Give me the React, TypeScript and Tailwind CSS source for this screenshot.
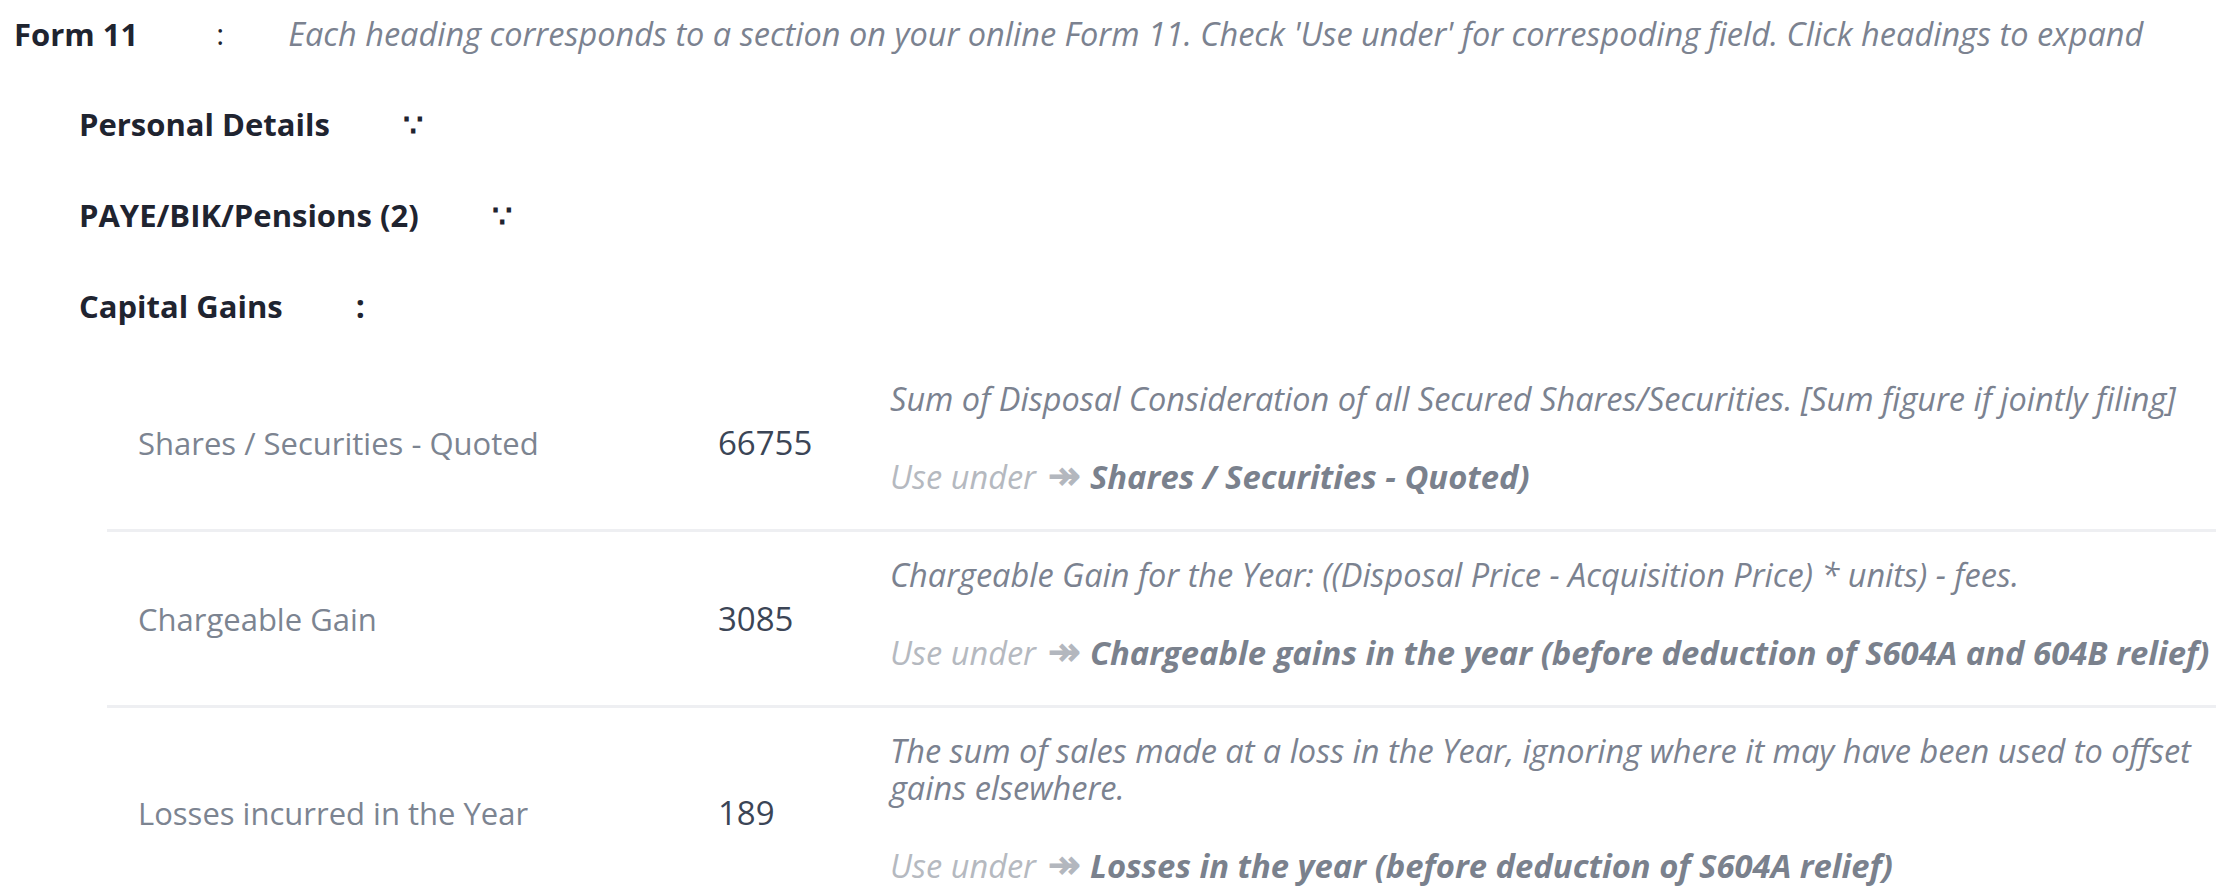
import React from "react";

const FONT = "font-['Open_Sans','Noto_Sans',sans-serif]";

type Row = {
  label: string;
  value: string;
  desc: string;
  use: string;
};

const rows: Row[] = [
  {
    label: "Shares / Securities - Quoted",
    value: "66755",
    desc: "Sum of Disposal Consideration of all Secured Shares/Securities. [Sum figure if jointly filing]",
    use: "Shares / Securities - Quoted)",
  },
  {
    label: "Chargeable Gain",
    value: "3085",
    desc: "Chargeable Gain for the Year: ((Disposal Price - Acquisition Price) * units) - fees.",
    use: "Chargeable gains in the year (before deduction of S604A and 604B relief)",
  },
  {
    label: "Losses incurred in the Year",
    value: "189",
    desc: "The sum of sales made at a loss in the Year, ignoring where it may have been used to offset gains elsewhere.",
    use: "Losses in the year (before deduction of S604A relief)",
  },
];

function Heading({ title, mark }: { title: string; mark: string }) {
  return (
    <div className="flex items-center h-[40px] pl-[79px]">
      <span className="text-[31px] font-bold text-[#1f2430] leading-[40px]">{title}</span>
      <span className="ml-[73px] text-[32px] font-bold text-[#1f2430] leading-[40px]">{mark}</span>
    </div>
  );
}

export default function App() {
  return (
    <div className={`${FONT} w-[2216px] h-[896px] overflow-hidden bg-white`}>
      <div className="flex items-center h-[40px] mt-[14px] pl-[14px]">
        <span className="text-[31px] font-bold text-[#1f2430] leading-[40px]">Form 11</span>
        <span className="ml-[78px] text-[30px] text-[#1f2430] leading-[40px]">:</span>
        <span className="ml-[64px] text-[32.5px] italic text-[#7b8290] leading-[40px] whitespace-nowrap">
          Each heading corresponds to a section on your online Form 11. Check 'Use under' for correspoding field. Click headings to expand
        </span>
      </div>
      <div className="flex flex-col gap-[51px] mt-[50px]">
        <Heading title="Personal Details" mark="∵" />
        <Heading title="PAYE/BIK/Pensions (2)" mark="∵" />
        <Heading title="Capital Gains" mark=":" />
      </div>
      <div className="ml-[107px] mt-[30px] w-[2200px]">
        {rows.map((r, i) => (
          <div
            key={r.label}
            className={`flex items-center ${i < rows.length - 1 ? "border-b-[3px] border-[#eeeff2]" : ""}`}
          >
            <div className="w-[611px] shrink-0 pl-[31px] text-[31px] text-[#7c8491] leading-[40px]">{r.label}</div>
            <div className="w-[172px] shrink-0 text-[33px] text-[#3b4556] leading-[40px]">{r.value}</div>
            <div className="w-[1360px] shrink-0 pt-[24px] pb-[38px]">
              <p className="text-[32.5px] italic text-[#7b8290] leading-[37px]">{r.desc}</p>
              <p className="mt-[37px] h-[37px] text-[32.5px] italic leading-[37px] whitespace-nowrap">
                <span className="text-[#b5b9c0]">Use under </span>
                <span className="text-[#b3b7be] font-bold not-italic text-[39px] leading-none ml-[4px]">↠</span>
                <span className="text-[#7a818d] font-bold text-[32.8px] leading-none"> {r.use}</span>
              </p>
            </div>
          </div>
        ))}
      </div>
    </div>
  );
}
